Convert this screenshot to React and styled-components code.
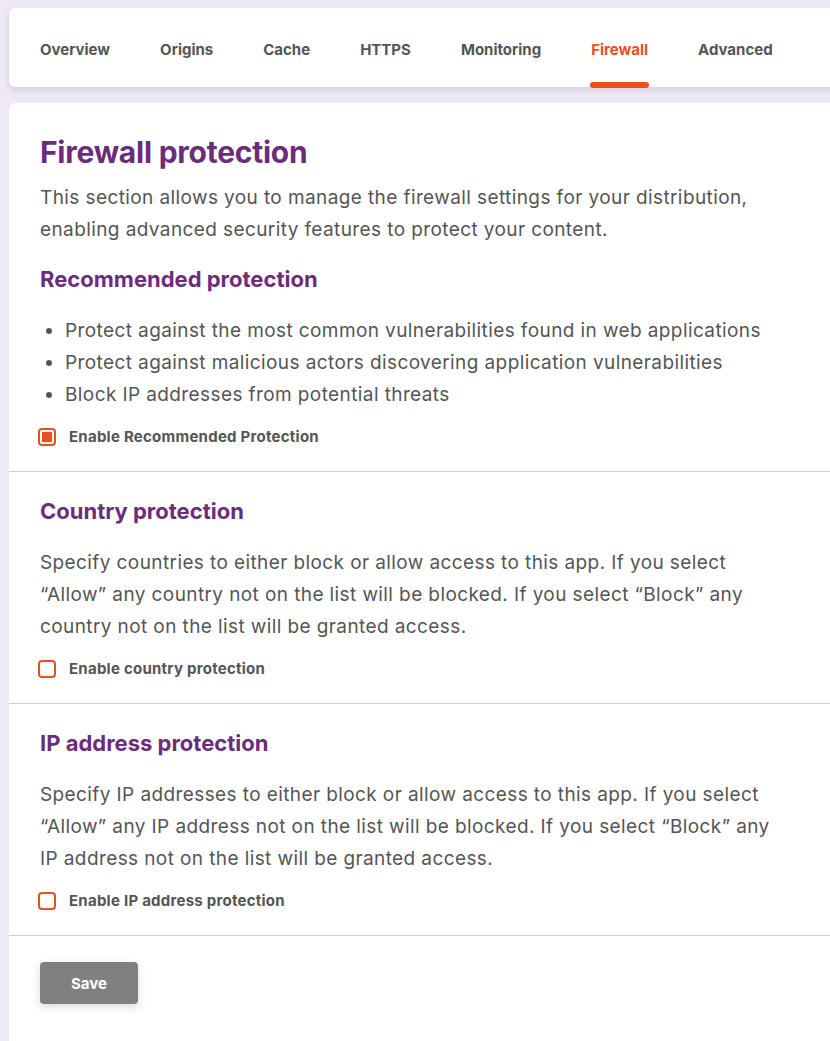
import React, { useState } from "react";
import styled, { createGlobalStyle } from "styled-components";

const GlobalStyle = createGlobalStyle`
  html, body {
    margin: 0;
    padding: 0;
    background: #efe9f5;
    overflow: hidden;
  }
  body {
    font-family: Inter, "Open Sans", sans-serif;
    color: #555;
  }
`;

const Page = styled.div`
  padding: 8px 0 0 9px;
  display: flex;
  flex-direction: column;
  gap: 16px;
`;

const TabBar = styled.nav`
  background: #fff;
  border-radius: 6px 0 0 6px;
  box-shadow: 0 3px 6px rgba(90, 70, 110, 0.18);
  height: 79px;
  display: flex;
  align-items: stretch;
  gap: 50px;
  padding-left: 31px;
  margin-right: -20px;
`;

const Tab = styled.a`
  position: relative;
  display: flex;
  align-items: center;
  padding-top: 3px;
  font-size: 15px;
  font-weight: 700;
  color: ${p => (p.$active ? "#e8501e" : "#555")};
  text-decoration: none;
  cursor: pointer;

  &::after {
    content: "";
    display: ${p => (p.$active ? "block" : "none")};
    position: absolute;
    left: -1px;
    right: -1px;
    bottom: -1px;
    height: 6px;
    border-radius: 3px;
    background: #e8501e;
  }
`;

const Card = styled.main`
  background: #fff;
  border-radius: 6px 0 0 0;
  margin-right: -20px;
  min-height: 960px;
`;

const Section = styled.section`
  padding: ${p => (p.$first ? "29px" : "24px")} 31px 25px;
  border-bottom: 1px solid #d0d0d0;
`;

const Title = styled.h1`
  margin: 0 0 10px;
  font-size: 30px;
  line-height: 40px;
  font-weight: 700;
  letter-spacing: -0.25px;
  color: #6b2d7b;
`;

const Heading = styled.h2`
  margin: 0 0 21px;
  font-size: 22px;
  line-height: 30px;
  font-weight: 700;
  color: #6b2d7b;
`;

const Text = styled.p`
  margin: 0 0 ${p => p.$mb || 16}px;
  max-width: 750px;
  font-size: 19px;
  line-height: 32px;
  letter-spacing: 0.4px;
  color: #555;
`;

const Bullets = styled.ul`
  margin: 0 0 16px;
  padding-left: 25px;
  max-width: 770px;
  font-size: 19px;
  line-height: 32px;
  letter-spacing: 0.4px;
`;

const CheckRow = styled.label`
  display: flex;
  align-items: center;
  gap: 13px;
  font-size: 15px;
  font-weight: 700;
  letter-spacing: 0.25px;
  color: #555;
  cursor: pointer;
`;

const Box = styled.span`
  width: 18px;
  height: 18px;
  box-sizing: border-box;
  border: 2px solid #e8501e;
  border-radius: 4px;
  display: flex;
  align-items: center;
  justify-content: center;
  margin-left: -2px;

  &::before {
    content: "";
    width: 10px;
    height: 10px;
    background: ${p => (p.$checked ? "#e8501e" : "transparent")};
  }
`;

const Footer = styled.div`
  padding: 26px 31px;
`;

const SaveButton = styled.button`
  width: 98px;
  height: 42px;
  border: none;
  border-radius: 4px;
  background: #808080;
  color: #fff;
  font-family: inherit;
  font-size: 15px;
  font-weight: 700;
  box-shadow: 0 3px 8px rgba(80, 60, 100, 0.2);
  cursor: pointer;
`;

const tabs = ["Overview", "Origins", "Cache", "HTTPS", "Monitoring", "Firewall", "Advanced"];

const Check = ({ checked, onChange, children }) => (
  <CheckRow onClick={onChange}>
    <Box $checked={checked} />
    {children}
  </CheckRow>
);

export default function App() {
  const [rec, setRec] = useState(true);
  const [country, setCountry] = useState(false);
  const [ip, setIp] = useState(false);

  return (
    <>
      <GlobalStyle />
      <Page>
        <TabBar>
          {tabs.map(t => (
            <Tab key={t} $active={t === "Firewall"}>{t}</Tab>
          ))}
        </TabBar>
        <Card>
          <Section $first>
            <Title>Firewall protection</Title>
            <Text $mb={18}>
              This section allows you to manage the firewall settings for your distribution,
              enabling advanced security features to protect your content.
            </Text>
            <Heading>Recommended protection</Heading>
            <Bullets>
              <li>Protect against the most common vulnerabilities found in web applications</li>
              <li>Protect against malicious actors discovering application vulnerabilities</li>
              <li>Block IP addresses from potential threats</li>
            </Bullets>
            <Check checked={rec} onChange={() => setRec(!rec)}>Enable Recommended Protection</Check>
          </Section>
          <Section>
            <Heading>Country protection</Heading>
            <Text>
              Specify countries to either block or allow access to this app. If you select
              “Allow” any country not on the list will be blocked. If you select “Block” any
              country not on the list will be granted access.
            </Text>
            <Check checked={country} onChange={() => setCountry(!country)}>Enable country protection</Check>
          </Section>
          <Section>
            <Heading>IP address protection</Heading>
            <Text>
              Specify IP addresses to either block or allow access to this app. If you select
              “Allow” any IP address not on the list will be blocked. If you select “Block” any
              IP address not on the list will be granted access.
            </Text>
            <Check checked={ip} onChange={() => setIp(!ip)}>Enable IP address protection</Check>
          </Section>
          <Footer>
            <SaveButton>Save</SaveButton>
          </Footer>
        </Card>
      </Page>
    </>
  );
}
